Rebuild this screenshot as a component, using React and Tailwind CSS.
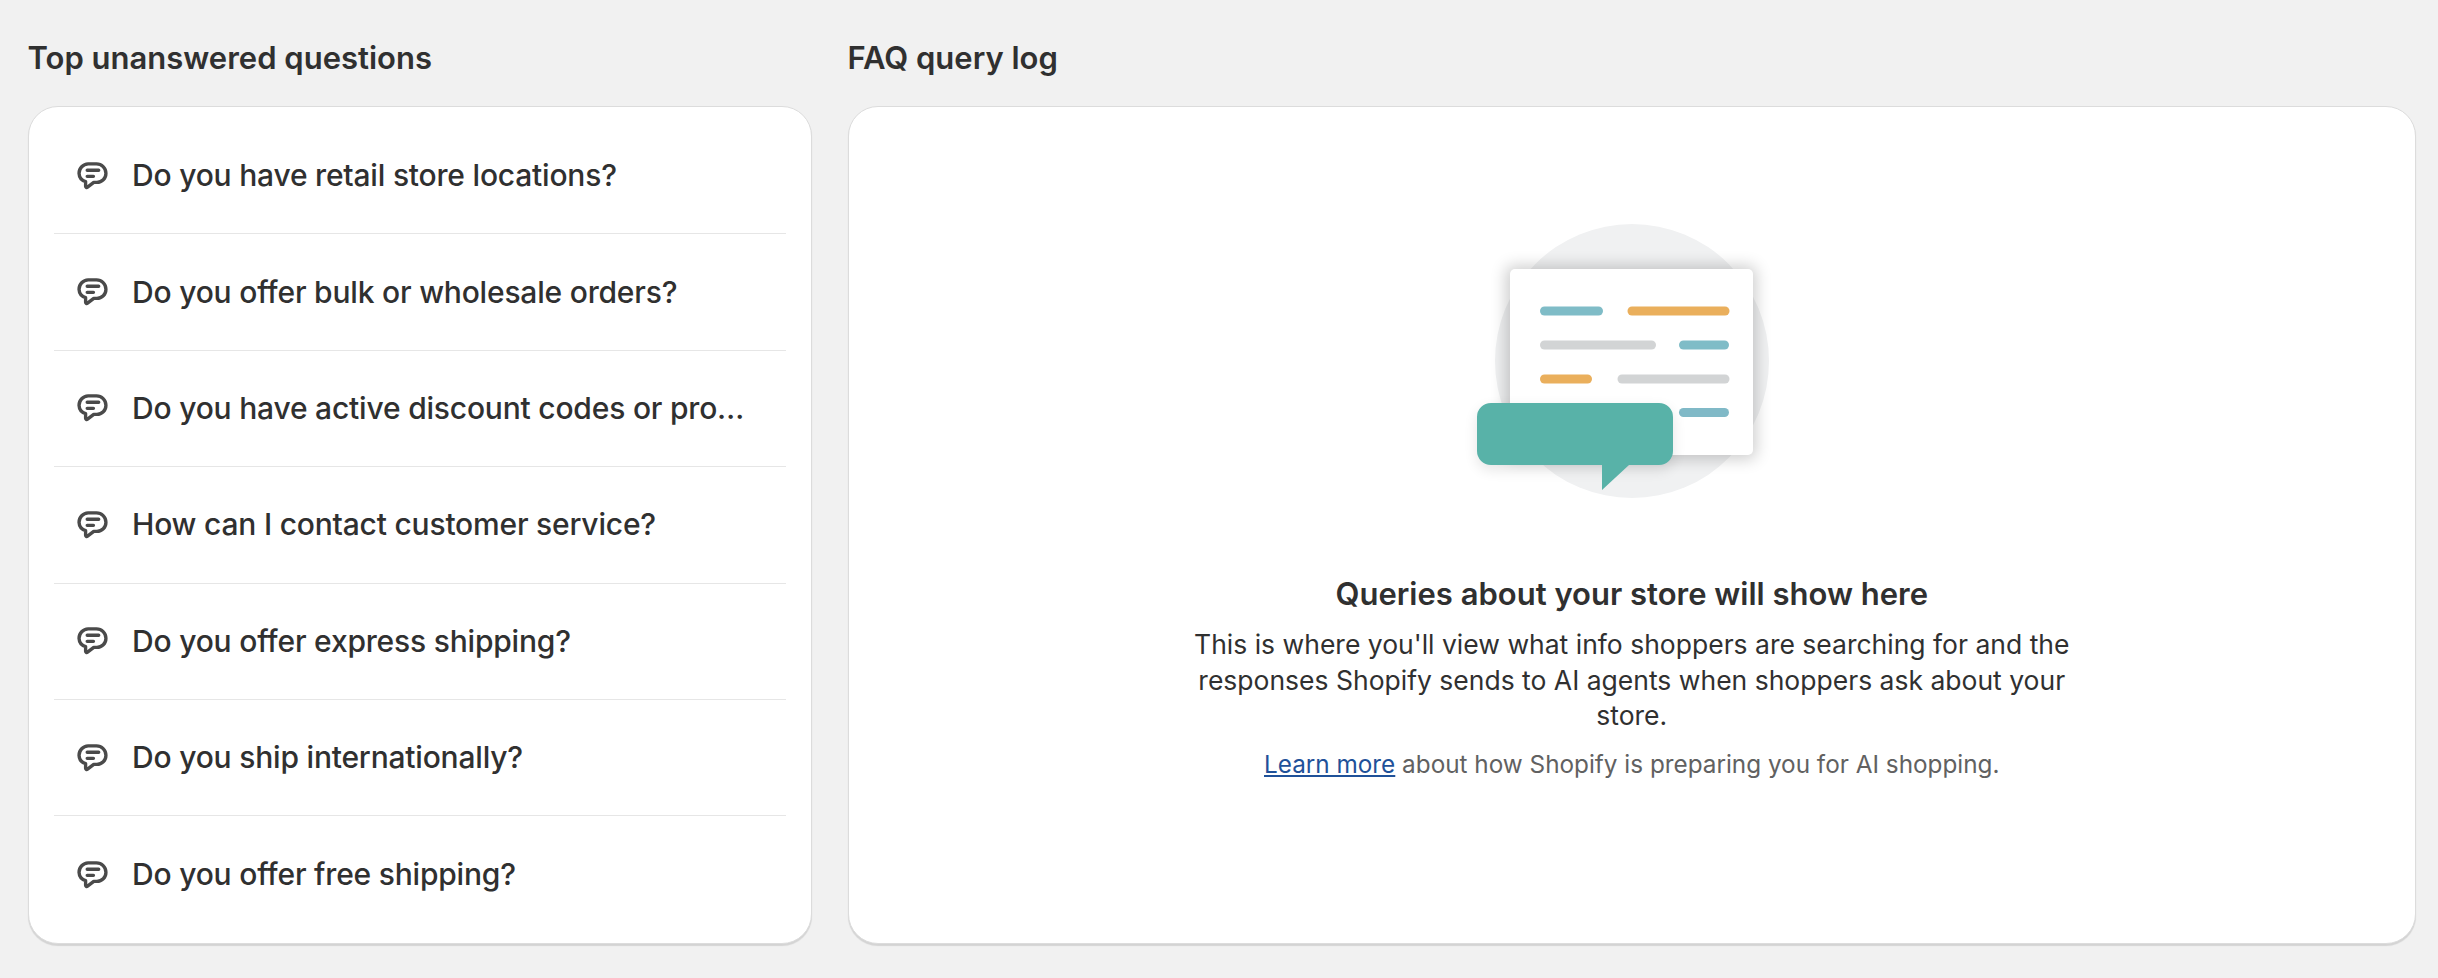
import React from "react";

const questions = [
  "Do you have retail store locations?",
  "Do you offer bulk or wholesale orders?",
  "Do you have active discount codes or pro…",
  "How can I contact customer service?",
  "Do you offer express shipping?",
  "Do you ship internationally?",
  "Do you offer free shipping?",
];

const ChatIcon = () => (
  <svg viewBox="0 0 20 20" className="w-[32px] h-[32px] shrink-0" fill="none" stroke="#4a4a4a" strokeWidth="2.1" strokeLinecap="round" strokeLinejoin="round">
    <path d="M7.6 2.4h5.2a5.9 5.9 0 0 1 5.9 5.9v.1a5.6 5.6 0 0 1-5.6 5.6h-2l-3.9 3c-.5.4-1.2.1-1.2-.6v-2.9a5.6 5.6 0 0 1-4.1-5.1v-.1a5.9 5.9 0 0 1 5.7-5.9z" />
    <path d="M7 6.4h7.2M7 10.2h3.9" />
  </svg>
);

const Illustration = () => (
  <svg viewBox="0 0 400 320" className="w-[400px] h-[320px] shrink-0">
    <defs>
      <filter id="docShadow" x="-30%" y="-30%" width="160%" height="160%">
        <feGaussianBlur stdDeviation="8" />
      </filter>
      <filter id="bubbleShadow" x="-30%" y="-30%" width="160%" height="160%">
        <feGaussianBlur stdDeviation="7" />
      </filter>
    </defs>
    <circle cx="200" cy="161" r="137" fill="#f0f1f2" />
    <rect x="74" y="66" width="250" height="193" rx="6" fill="#000" opacity="0.2" filter="url(#docShadow)" />
    <rect x="78" y="69" width="243" height="186" rx="5" fill="#fff" />
    <rect x="108" y="106.5" width="63" height="9" rx="4.5" fill="#7fbcc7" />
    <rect x="195.5" y="106.5" width="102" height="9" rx="4.5" fill="#eaaf5c" />
    <rect x="108" y="140.5" width="116" height="9" rx="4.5" fill="#d2d4d5" />
    <rect x="247" y="140.5" width="50" height="9" rx="4.5" fill="#7fbcc7" />
    <rect x="108" y="174.5" width="52" height="9" rx="4.5" fill="#eaaf5c" />
    <rect x="185.5" y="174.5" width="112" height="9" rx="4.5" fill="#d2d4d5" />
    <rect x="247" y="208" width="50" height="9" rx="4.5" fill="#80b9c7" />
    <rect x="45" y="208" width="196" height="62" rx="14" fill="#000" opacity="0.1" filter="url(#bubbleShadow)" />
    <path d="M59 203h168a14 14 0 0 1 14 14v34a14 14 0 0 1-14 14h-30l-27 25v-25h-111a14 14 0 0 1-14-14v-34a14 14 0 0 1 14-14z" fill="#58b2a8" />
  </svg>
);

const App = () => {
  return (
    <div className="min-h-screen bg-[#f1f1f1] pl-[27.5px] pr-[22px] pt-[40px] text-[#303030] font-['Inter',sans-serif] flex gap-[36px]">
      <section className="w-[784px] shrink-0">
        <h2 className="text-[31px] leading-[36px] font-semibold mb-[30px]">Top unanswered questions</h2>
        <div className="h-[838px] bg-white rounded-[30px] border border-[#dcdcdc] shadow-[0_2px_1px_rgba(0,0,0,0.12)] px-[25px] py-[11px]">
          {questions.map((q, i) => (
            <div
              key={q}
              className={`h-[116.4px] flex items-center gap-[24.5px] pl-[22px] pr-[24px] ${i < questions.length - 1 ? "border-b border-[#e6e6e6]" : ""}`}
            >
              <ChatIcon />
              <span className="whitespace-nowrap text-[30px] font-medium tracking-[-0.2px] text-[#303030]">{q}</span>
            </div>
          ))}
        </div>
      </section>

      <section className="flex-1 min-w-0">
        <h2 className="text-[31px] leading-[36px] font-semibold mb-[30px]">FAQ query log</h2>
        <div className="h-[838px] bg-white rounded-[30px] border border-[#dcdcdc] shadow-[0_2px_1px_rgba(0,0,0,0.12)] flex flex-col items-center pt-[93px]">
          <Illustration />
          <h3 className="mt-[54px] text-[31px] leading-[40px] font-semibold">Queries about your store will show here</h3>
          <p className="mt-[13px] w-[900px] text-center text-[26.5px] leading-[35.5px] text-[#303030]">
            This is where you'll view what info shoppers are searching for and the responses Shopify sends to AI agents when shoppers ask about your store.
          </p>
          <p className="mt-[13.5px] text-[24.3px] leading-[34px] text-[#616161]">
            <a href="#" className="text-[#1f5199] underline">Learn more</a> about how Shopify is preparing you for AI shopping.
          </p>
        </div>
      </section>
    </div>
  );
};

export default App;
